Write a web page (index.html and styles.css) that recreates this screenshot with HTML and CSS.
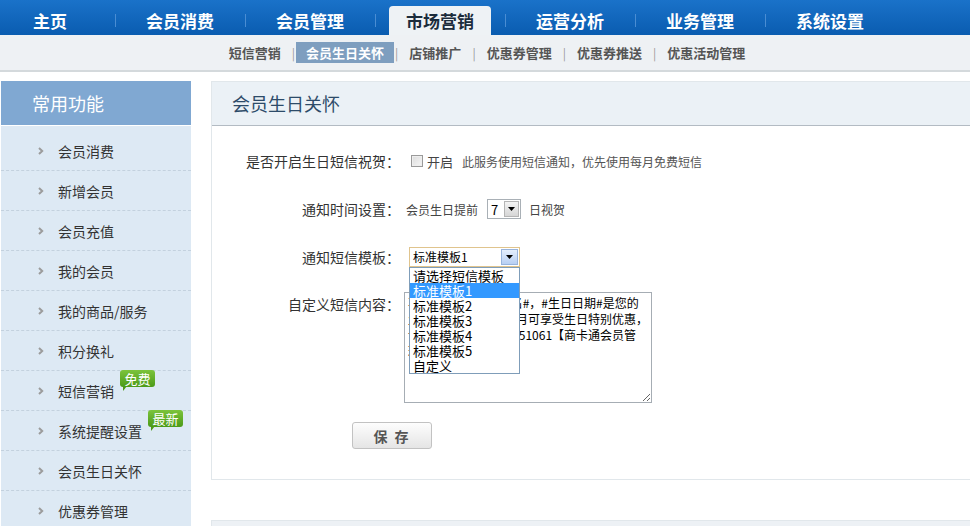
FILE: index.html
```html
<!DOCTYPE html>
<html lang="zh-CN">

<head>
    <meta charset="utf-8">
    <meta name="viewport" content="width=device-width, initial-scale=1.0">
    <title>会员生日关怀</title>

    <link rel="stylesheet" href="styles.css">

</head>

<body>

    <header>
        <nav class="topnav">
            <ul>
                <li>主页</li>
                <li>会员消费</li>
                <li>会员管理</li>
                <li class="valgt"><span>市场营销</span></li>
                <li>运营分析</li>
                <li>业务管理</li>
                <li>系统设置</li>
            </ul>
        </nav>

        <nav class="subnav">
            <a href="#">短信营销</a><i>|</i>
            <a href="#" class="valgt">会员生日关怀</a><i>|</i>
            <a href="#">店铺推广</a><i>|</i>
            <a href="#">优惠券管理</a><i>|</i>
            <a href="#">优惠券推送</a><i>|</i>
            <a href="#">优惠活动管理</a>
        </nav>
    </header>

    <div class="wrap">

        <aside class="sidebar">
            <h2>常用功能</h2>
            <ul>
                <li><svg width="6" height="8" viewBox="0 0 6 8"><path d="M1 1l3.2 3L1 7" /></svg><span>会员消费</span></li>
                <li><svg width="6" height="8" viewBox="0 0 6 8"><path d="M1 1l3.2 3L1 7" /></svg><span>新增会员</span></li>
                <li><svg width="6" height="8" viewBox="0 0 6 8"><path d="M1 1l3.2 3L1 7" /></svg><span>会员充值</span></li>
                <li><svg width="6" height="8" viewBox="0 0 6 8"><path d="M1 1l3.2 3L1 7" /></svg><span>我的会员</span></li>
                <li><svg width="6" height="8" viewBox="0 0 6 8"><path d="M1 1l3.2 3L1 7" /></svg><span>我的商品/服务</span></li>
                <li><svg width="6" height="8" viewBox="0 0 6 8"><path d="M1 1l3.2 3L1 7" /></svg><span>积分换礼</span></li>
                <li><svg width="6" height="8" viewBox="0 0 6 8"><path d="M1 1l3.2 3L1 7" /></svg><span class="med-badge">短信营销<b class="badge">免费</b></span></li>
                <li><svg width="6" height="8" viewBox="0 0 6 8"><path d="M1 1l3.2 3L1 7" /></svg><span class="med-badge">系统提醒设置<b class="badge">最新</b></span></li>
                <li><svg width="6" height="8" viewBox="0 0 6 8"><path d="M1 1l3.2 3L1 7" /></svg><span>会员生日关怀</span></li>
                <li><svg width="6" height="8" viewBox="0 0 6 8"><path d="M1 1l3.2 3L1 7" /></svg><span>优惠券管理</span></li>
            </ul>
        </aside>

        <main>
            <section class="panel">
                <h1>会员生日关怀</h1>

                <form>
                    <div class="row">
                        <label>是否开启生日短信祝贺：</label>
                        <span class="checkbox"></span>
                        <span class="open">开启</span>
                        <span class="note">此服务使用短信通知，优先使用每月免费短信</span>
                    </div>

                    <div class="row">
                        <label>通知时间设置：</label>
                        <span class="small">会员生日提前</span>
                        <span class="days">7<span class="days-btn"><svg width="7" height="4" viewBox="0 0 7 4"><path d="M0 0h7L3.5 4z" /></svg></span></span>
                        <span class="small after">日视贺</span>
                    </div>

                    <div class="row">
                        <label>通知短信模板：</label>
                        <div class="select">
                            标准模板1
                            <span class="select-btn"><svg width="7" height="4" viewBox="0 0 7 4"><path d="M0 0h7L3.5 4z" /></svg></span>
                            <ul class="droplist">
                                <li>请选择短信模板</li>
                                <li class="hover">标准模板1</li>
                                <li>标准模板2</li>
                                <li>标准模板3</li>
                                <li>标准模板4</li>
                                <li>标准模板5</li>
                                <li>自定义</li>
                            </ul>
                        </div>
                    </div>

                    <div class="row text-row">
                        <label>自定义短信内容：</label>
                        <textarea>尊敬的会员#会员姓名#，#生日日期#是您的
生日，凭此短信于本月可享受生日特别优惠，
详询电话：0755-88251061【商卡通会员管
理系统】</textarea>
                    </div>

                    <button type="button" class="save">保 存</button>
                </form>
            </section>

            <section class="panel next">
                <h1></h1>
            </section>
        </main>

    </div>

</body>

</html>
```

FILE: styles.css
```css
html {
    overflow: hidden;
}

body {
    margin: 0;
    font-family: "Noto Sans CJK SC", "Liberation Sans", sans-serif;
    font-size: 12px;
    color: #333;
    background-color: #fff;
}

/* topmenu */

.topnav {
    height: 35px;
    background: linear-gradient(#1a72c9, #0a5cb0);
}

.topnav ul {
    list-style: none;
    margin: 0 0 0 -15px;
    padding: 0;
    display: flex;
}

.topnav li {
    position: relative;
    width: 130px;
    height: 35px;
    padding-top: 6px;
    box-sizing: border-box;
    text-align: center;
    color: #fff;
    font-size: 17px;
    font-weight: bold;
    line-height: 29px;
}

.topnav li + li::before {
    content: "";
    position: absolute;
    left: 0;
    top: 14px;
    width: 1px;
    height: 13px;
    background-color: #4a8dd3;
}

.topnav .valgt span {
    display: block;
    width: 102px;
    height: 29px;
    margin: 0 auto;
    background-color: #eef2f5;
    border-radius: 4px 4px 0 0;
    color: #1c2c3c;
}

.subnav {
    height: 35px;
    background-color: #eef1f4;
    border-bottom: 2px solid #d4d9dc;
    display: flex;
    justify-content: center;
    align-items: center;
    padding-left: 4px;
}

.subnav a {
    padding: 0 10px;
    line-height: 21px;
    font-size: 13px;
    font-weight: bold;
    color: #555;
    text-decoration: none;
}

.subnav .valgt {
    background-color: #7e9ebf;
    color: #fff;
}

.subnav i {
    font-style: normal;
    color: #999;
    margin: 0 1px;
}

/* layout */

.wrap {
    display: flex;
    gap: 20px;
    margin-top: 9px;
    padding-left: 1px;
}

.sidebar {
    flex: 0 0 190px;
}

.sidebar h2 {
    margin: 0;
    height: 44px;
    line-height: 44px;
    padding-left: 31px;
    background-color: #80a8d2;
    color: #fff;
    font-size: 18px;
    font-weight: normal;
}

.sidebar ul {
    list-style: none;
    margin: 1px 0 0;
    padding: 5px 0 0;
    background-color: #dde9f4;
}

.sidebar li {
    height: 39px;
    border-bottom: 1px dashed #c3d1de;
    display: flex;
    align-items: center;
    padding-left: 37px;
    font-size: 14px;
    color: #333;
}

.sidebar svg {
    margin-right: 14px;
}

.sidebar svg path {
    fill: none;
    stroke: #9c9c9c;
    stroke-width: 2;
}

.med-badge {
    position: relative;
}

.badge {
    position: absolute;
    left: 100%;
    top: -11px;
    margin-left: 6px;
    width: 35px;
    height: 17px;
    line-height: 17px;
    text-align: center;
    font-size: 13px;
    font-weight: normal;
    color: #fff;
    background: linear-gradient(#7cc43c, #4b9a18);
    border-radius: 3px;
    white-space: nowrap;
}

.badge::after {
    content: "";
    position: absolute;
    left: 3px;
    top: 16px;
    border-left: 4px solid #4b9a18;
    border-bottom: 5px solid transparent;
}

main {
    flex: 0 0 800px;
}

.panel {
    border: 1px solid #e1e7eb;
    background-color: #fff;
}

.panel h1 {
    margin: 0;
    height: 43px;
    line-height: 43px;
    padding-left: 20px;
    background-color: #ebf1f6;
    border-bottom: 1px solid #b3bbc3;
    font-size: 18px;
    font-weight: normal;
    color: #2d4b69;
}

.panel.next {
    margin-top: 40px;
}

.panel.next h1 {
    background-color: #edf1f5;
    border-bottom: 0;
}

/* form */

form {
    padding: 11px 0 30px;
}

.row {
    display: flex;
    align-items: center;
    height: 48px;
}

.row label {
    flex: 0 0 188px;
    text-align: right;
    font-size: 14px;
    color: #333;
}

.checkbox {
    width: 10px;
    height: 10px;
    margin-left: 11px;
    border: 1px solid #9a9a9a;
    background: linear-gradient(135deg, #dcdcdc, #f6f6f6);
    box-shadow: inset 0 0 0 1px #eee;
}

.open {
    margin-left: 4px;
    font-size: 13px;
    color: #444;
}

.note {
    margin-left: 9px;
    color: #555;
}

.small {
    margin-left: 6px;
    color: #444;
}

.small.after {
    margin-left: 8px;
}

.days {
    margin-left: 9px;
    width: 34px;
    height: 20px;
    box-sizing: border-box;
    border: 1px solid #a9b0b6;
    display: flex;
    align-items: center;
    justify-content: space-between;
    padding-left: 3px;
    font-size: 13px;
    color: #000;
}

.days-btn {
    width: 15px;
    height: 16px;
    margin-right: 1px;
    background: linear-gradient(#f4f4f4, #d6d6d6);
    border: 1px solid #b5b5b5;
    box-sizing: border-box;
    display: flex;
    align-items: center;
    justify-content: center;
}

.select {
    position: relative;
    margin-left: 9px;
    width: 111px;
    height: 20px;
    box-sizing: border-box;
    border: 1px solid #e0c48d;
    padding-left: 3px;
    line-height: 18px;
    font-size: 12px;
    color: #000;
}

.select-btn {
    position: absolute;
    right: 1px;
    top: 1px;
    width: 17px;
    height: 16px;
    box-sizing: border-box;
    border: 1px solid #98b4dc;
    background: linear-gradient(#e4eefc, #b7cff3);
    display: flex;
    align-items: center;
    justify-content: center;
}

.droplist {
    position: absolute;
    left: -1px;
    top: 19px;
    z-index: 2;
    width: 111px;
    box-sizing: border-box;
    margin: 0;
    padding: 0;
    list-style: none;
    background-color: #fff;
    border: 1px solid #7f9db9;
}

.droplist li {
    height: 15px;
    line-height: 15px;
    padding-left: 3px;
    font-size: 13px;
    color: #000;
}

.droplist .hover {
    background-color: #3399ff;
    color: #fff;
}

.text-row {
    height: auto;
    align-items: flex-start;
    margin-top: 11px;
}

.text-row label {
    line-height: 20px;
    margin-top: 2px;
}

textarea {
    margin: 0 0 0 4px;
    width: 248px;
    height: 111px;
    box-sizing: border-box;
    border: 1px solid #a6adb4;
    padding: 2px 2px 2px 3px;
    font-family: "Noto Sans CJK SC", "Liberation Sans", sans-serif;
    font-size: 12px;
    line-height: 16px;
    color: #000;
    overflow: hidden;
}

.save {
    display: block;
    margin: 19px 0 0 140px;
    width: 80px;
    height: 27px;
    border: 1px solid #c2c2c2;
    border-radius: 3px;
    background: linear-gradient(#fdfdfd, #e5e5e5);
    font-family: "Noto Sans CJK SC", "Liberation Sans", sans-serif;
    font-size: 14px;
    font-weight: bold;
    color: #555;
    letter-spacing: 2px;
}
```
